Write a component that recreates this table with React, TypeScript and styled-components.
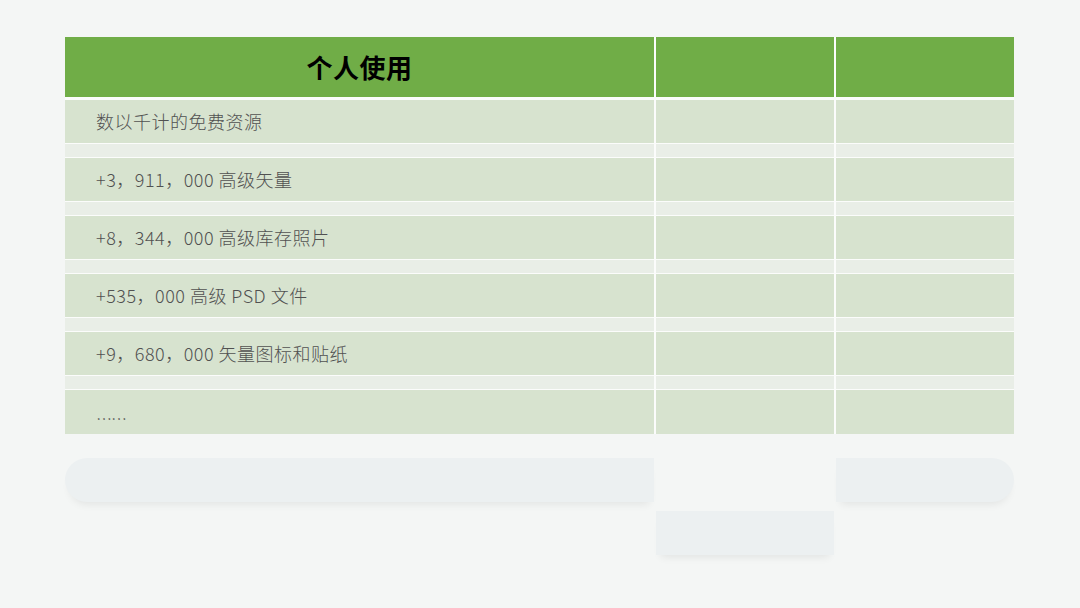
import React from "react";
import styled, { createGlobalStyle } from "styled-components";

const Global = createGlobalStyle`
  html, body { margin: 0; padding: 0; background: #f4f6f5; }
  body { font-family: "Noto Sans CJK SC", "Noto Sans", sans-serif; }
`;

const Page = styled.div`
  width: 1080px;
  height: 608px;
  box-sizing: border-box;
  padding: 37px 66px 0 65px;
  background: #f4f6f5;
  overflow: hidden;
`;

const Table = styled.div`
  display: grid;
  grid-template-columns: 589px 178px 178px;
  grid-template-rows: 62px 43px 13px 43px 13px 43px 13px 43px 13px 43px 13px 44px;
  column-gap: 2px;
  row-gap: 1px;
  background: #fbfcfb;
`;

const HeadCell = styled.div`
  background: #70ad47;
  display: flex;
  align-items: center;
  justify-content: center;
  font-size: 26px;
  font-weight: 700;
  color: #000;
  margin-bottom: 2px;
  padding-bottom: 1px;
  letter-spacing: 0.5px;
`;

const Cell = styled.div<{ $light?: boolean }>`
  background: ${(p) => (p.$light ? "#e9eee7" : "#d7e3cf")};
  display: flex;
  align-items: center;
  padding-left: 31px;
  padding-bottom: 2px;
  font-size: 18px;
  font-weight: 300;
  letter-spacing: 0.5px;
  color: #515151;
  white-space: nowrap;
`;

const Dots = styled.span`
  padding-top: 14px;
  font-size: 16px;
  letter-spacing: -1px;
`;

const Ghosts = styled.div`
  display: grid;
  grid-template-columns: 589px 178px 178px;
  column-gap: 2px;
  align-items: start;
  margin-top: 24px;
`;

const Ghost = styled.div<{ $shape: "left" | "mid" | "right" }>`
  height: 44px;
  background: #ecf0f1;
  margin-top: ${(p) => (p.$shape === "mid" ? "53px" : "0")};
  border-radius: ${(p) =>
    p.$shape === "left" ? "22px 0 0 22px" : p.$shape === "right" ? "0 22px 22px 0" : "0"};
  box-shadow: 0 7px 8px -5px rgba(0, 0, 0, 0.08);
`;

const rows = [
  "数以千计的免费资源",
  "+3，911，000 高级矢量",
  "+8，344，000 高级库存照片",
  "+535，000 高级 PSD 文件",
  "+9，680，000 矢量图标和贴纸",
];

export default function App() {
  return (
    <>
      <Global />
      <Page>
        <Table>
          <HeadCell>个人使用</HeadCell>
          <HeadCell />
          <HeadCell />
          {rows.map((r, i) => (
            <React.Fragment key={i}>
              <Cell>{r}</Cell>
              <Cell />
              <Cell />
              <Cell $light />
              <Cell $light />
              <Cell $light />
            </React.Fragment>
          ))}
          <Cell>
            <Dots>……</Dots>
          </Cell>
          <Cell />
          <Cell />
        </Table>
        <Ghosts>
          <Ghost $shape="left" />
          <Ghost $shape="mid" />
          <Ghost $shape="right" />
        </Ghosts>
      </Page>
    </>
  );
}
